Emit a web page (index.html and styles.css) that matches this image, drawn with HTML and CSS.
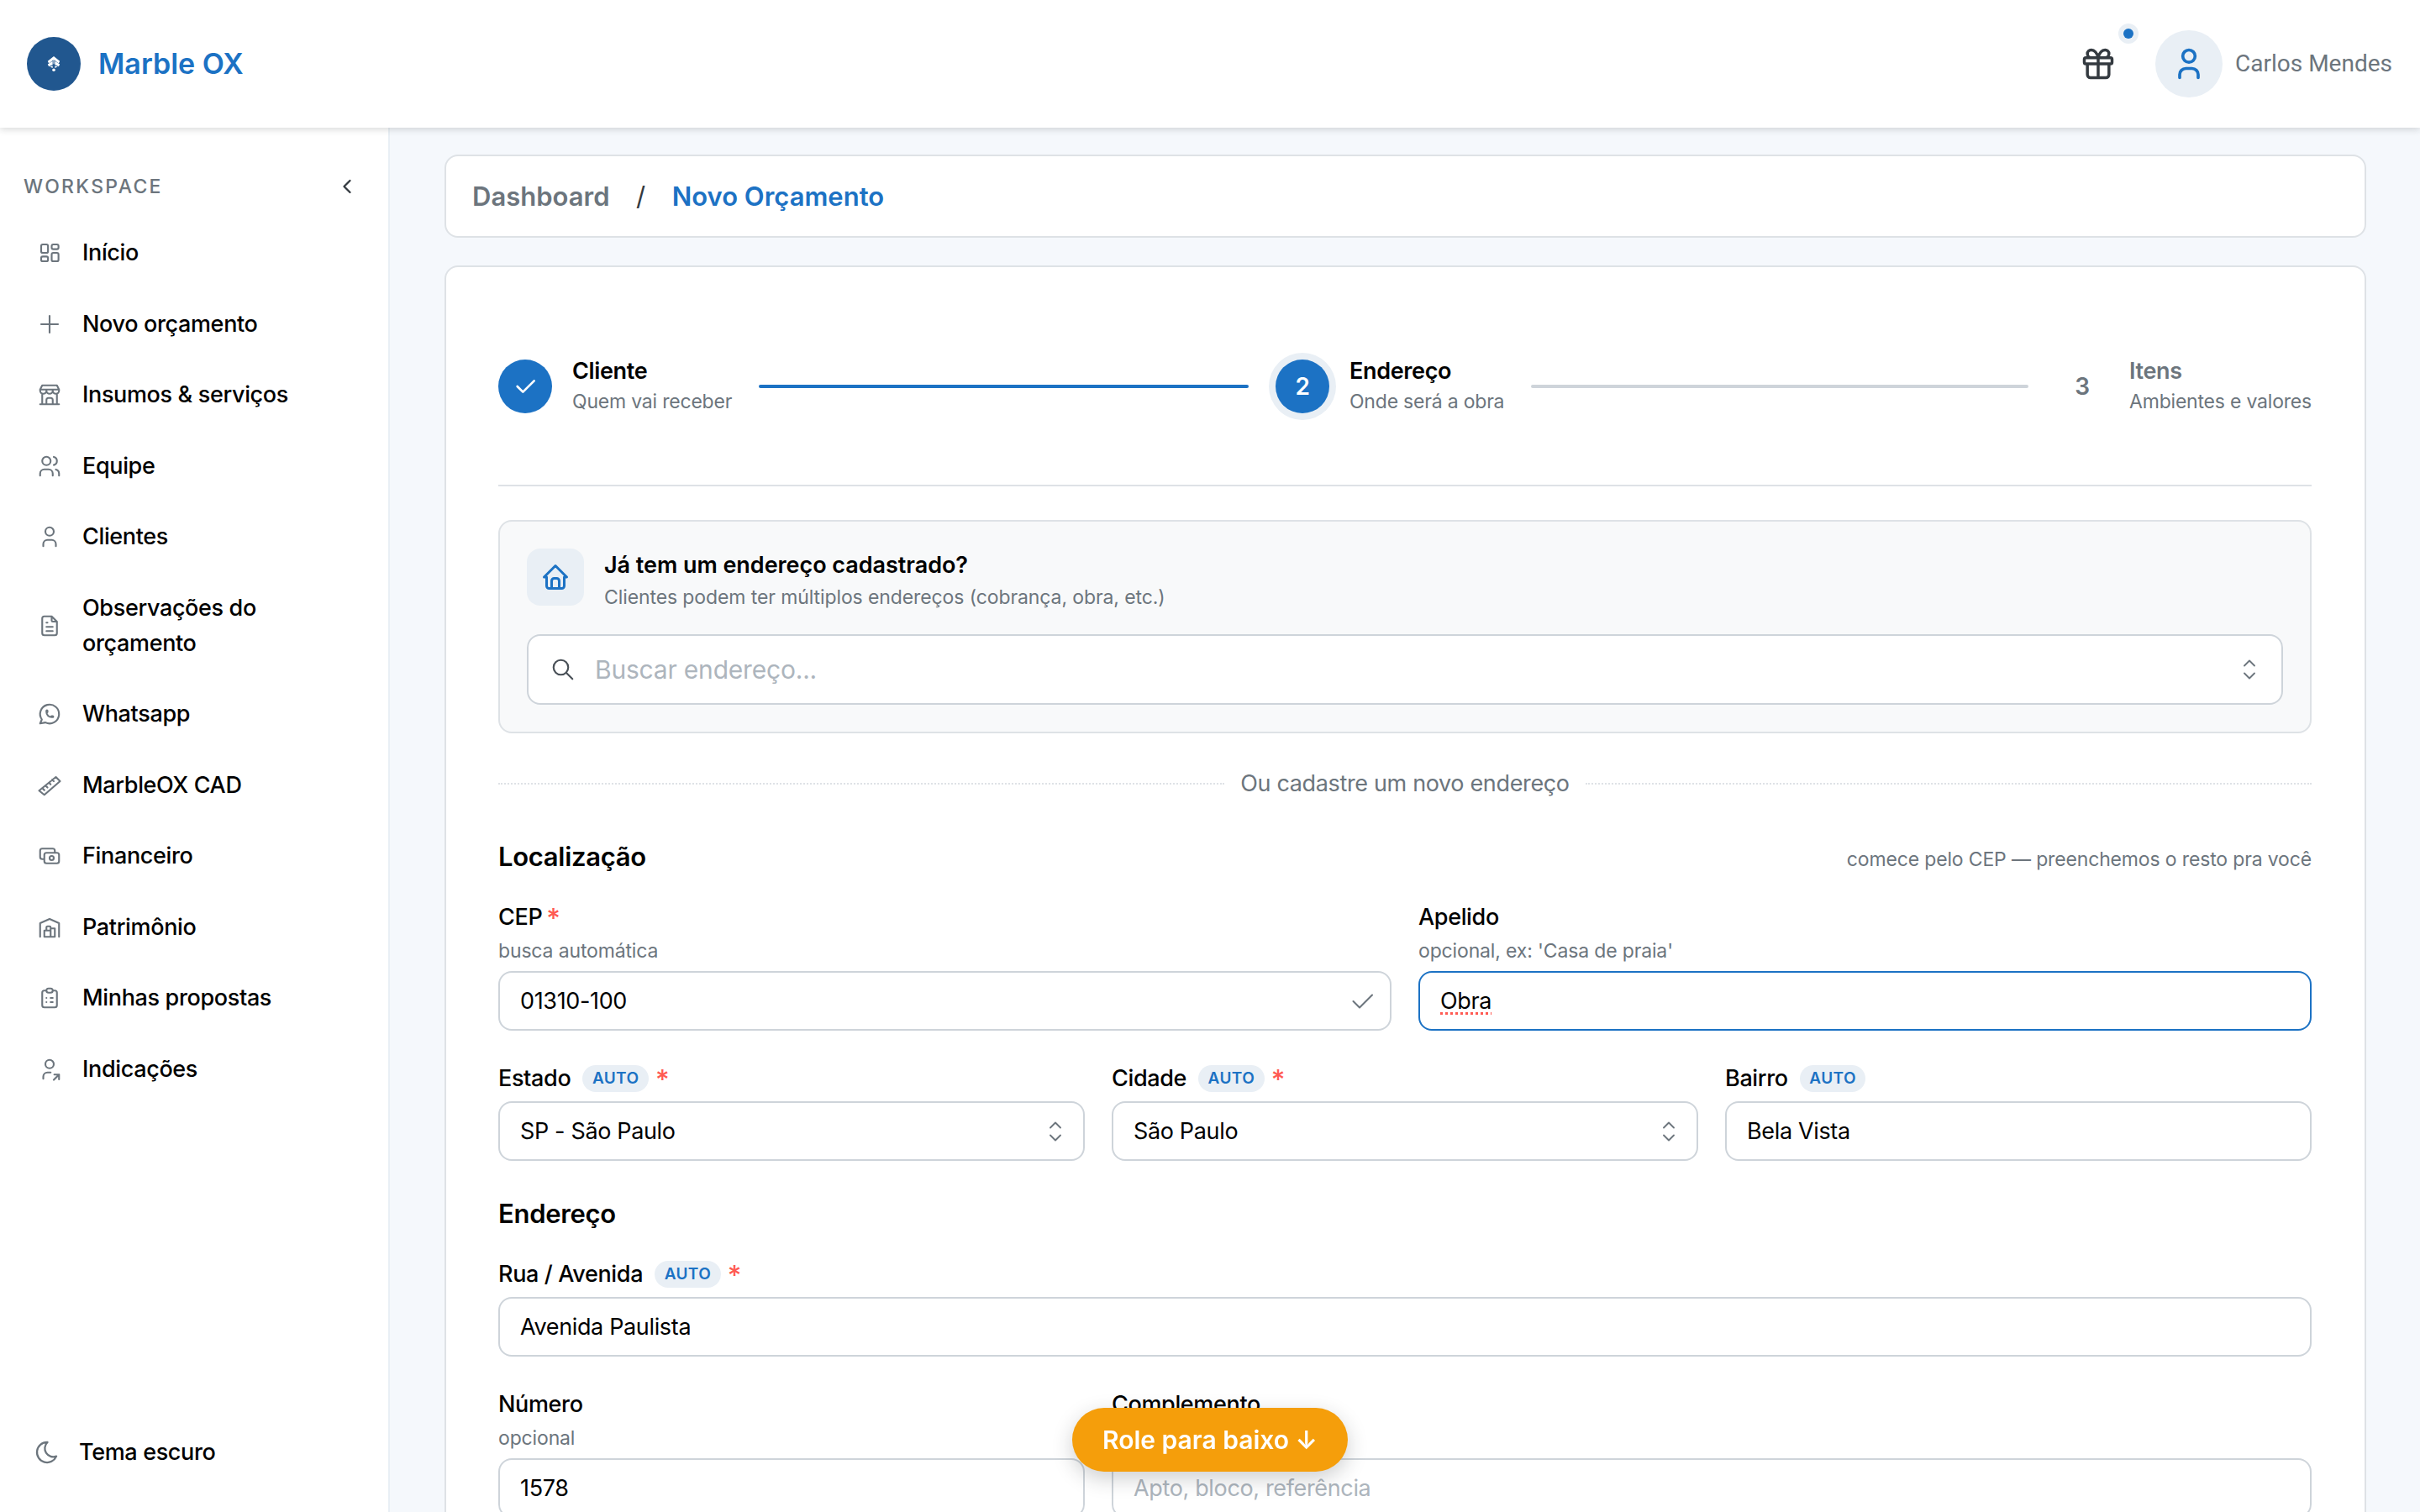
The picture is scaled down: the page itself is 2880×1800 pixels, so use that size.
FILE: index.html
```html
<!DOCTYPE html>
<html lang="pt-BR">
<head>
    <meta charset="UTF-8">
    <title>Marble OX - Novo Orçamento</title>
    <link rel="stylesheet" href="styles.css">
</head>
<body>
    <!-- icon sprite -->
    <svg class="sprite" xmlns="http://www.w3.org/2000/svg">
        <symbol id="i-grid" viewBox="0 0 24 24"><rect x="4" y="4" width="6.5" height="8" rx="1.5"/><rect x="14" y="4" width="6.5" height="4.500" rx="1.5"/><rect x="4" y="15.500" width="6.5" height="4.500" rx="1.5"/><rect x="14" y="12" width="6.5" height="8" rx="1.5"/></symbol>
        <symbol id="i-plus" viewBox="0 0 24 24"><path d="M12 4v16M4 12h16"/></symbol>
        <symbol id="i-store" viewBox="0 0 24 24"><path d="M3 21h18M3 7v1a3 3 0 0 0 6 0v-1m0 1a3 3 0 0 0 6 0v-1m0 1a3 3 0 0 0 6 0v-1h-18l2-4h14l2 4M5 21v-10.15M19 21v-10.15M9 21v-4a2 2 0 0 1 2-2h2a2 2 0 0 1 2 2v4"/></symbol>
        <symbol id="i-users" viewBox="0 0 24 24"><path d="M5 7a4 4 0 1 0 8 0a4 4 0 1 0-8 0M3 21v-2a4 4 0 0 1 4-4h4a4 4 0 0 1 4 4v2M16 3.13a4 4 0 0 1 0 7.75M21 21v-2a4 4 0 0 0-3-3.85"/></symbol>
        <symbol id="i-user" viewBox="0 0 24 24"><path d="M8 7a4 4 0 1 0 8 0a4 4 0 0 0-8 0M6 21v-2a4 4 0 0 1 4-4h4a4 4 0 0 1 4 4v2"/></symbol>
        <symbol id="i-file" viewBox="0 0 24 24"><path d="M14 3v4a1 1 0 0 0 1 1h4M17 21h-10a2 2 0 0 1-2-2v-14a2 2 0 0 1 2-2h7l5 5v11a2 2 0 0 1-2 2zM9 9h1M9 13h6M9 17h6"/></symbol>
        <symbol id="i-whatsapp" viewBox="0 0 24 24"><path d="M3 21l1.65-3.8a9 9 0 1 1 3.4 2.9l-5.05.9M9 10a.5.5 0 0 0 1 0v-1a.5.5 0 0 0-1 0v1a5 5 0 0 0 5 5h1a.5.5 0 0 0 0-1h-1a.5.5 0 0 0 0 1"/></symbol>
        <symbol id="i-ruler" viewBox="0 0 24 24"><path d="M18 4l4 4l-15 13l-5-4zM16 8l-1.5-1.5M13 11l-1.5-1.5M10 14l-1.5-1.5M7 16.5l-1.5-1.5"/></symbol>
        <symbol id="i-cash" viewBox="0 0 24 24"><path d="M7 11a2 2 0 0 1 2-2h10a2 2 0 0 1 2 2v6a2 2 0 0 1-2 2h-10a2 2 0 0 1-2-2zM12 14a2 2 0 1 0 4 0a2 2 0 1 0-4 0M17 9v-2a2 2 0 0 0-2-2h-10a2 2 0 0 0-2 2v6a2 2 0 0 0 2 2h2"/></symbol>
        <symbol id="i-warehouse" viewBox="0 0 24 24"><path d="M3 21v-13l9-4l9 4v13M13 13h4v8h-10v-6h6M13 21v-9a1 1 0 0 0-1-1h-2a1 1 0 0 0-1 1v3"/></symbol>
        <symbol id="i-clipboard" viewBox="0 0 24 24"><path d="M9 5h-2a2 2 0 0 0-2 2v12a2 2 0 0 0 2 2h10a2 2 0 0 0 2-2v-12a2 2 0 0 0-2-2h-2M9 5a2 2 0 0 1 2-2h2a2 2 0 0 1 2 2a2 2 0 0 1-2 2h-2a2 2 0 0 1-2-2zM9 12h.01M13 12h2M9 16h.01M13 16h2"/></symbol>
        <symbol id="i-share" viewBox="0 0 24 24"><path d="M8 7a4 4 0 1 0 8 0a4 4 0 0 0-8 0M6 21v-2a4 4 0 0 1 4-4h3M16 22l5-5M21 21.5v-4.5h-4.5"/></symbol>
        <symbol id="i-moon" viewBox="0 0 24 24"><path d="M12 3h.393a7.5 7.5 0 0 0 7.92 12.446a9 9 0 1 1-8.313-12.454z"/></symbol>
        <symbol id="i-gift" viewBox="0 0 24 24"><path d="M3 9a1 1 0 0 1 1-1h16a1 1 0 0 1 1 1v2a1 1 0 0 1-1 1h-16a1 1 0 0 1-1-1zM12 8v13M19 12v7a2 2 0 0 1-2 2h-10a2 2 0 0 1-2-2v-7M7.5 8a2.5 2.5 0 0 1 0-5a4.8 8 0 0 1 4.5 5a4.8 8 0 0 1 4.5-5a2.5 2.5 0 0 1 0 5"/></symbol>
        <symbol id="i-home" viewBox="0 0 24 24"><path d="M5 12h-2l9-9l9 9h-2M5 12v7a2 2 0 0 0 2 2h10a2 2 0 0 0 2-2v-7M9 21v-6a2 2 0 0 1 2-2h2a2 2 0 0 1 2 2v6"/></symbol>
        <symbol id="i-search" viewBox="0 0 24 24"><path d="M3 10a7 7 0 1 0 14 0a7 7 0 1 0-14 0M21 21l-6-6"/></symbol>
        <symbol id="i-selector" viewBox="0 0 24 24"><path d="M8 9l4-4l4 4M16 15l-4 4l-4-4"/></symbol>
        <symbol id="i-check" viewBox="0 0 24 24"><path d="M5 12l5 5l10-10"/></symbol>
        <symbol id="i-chevron" viewBox="0 0 24 24"><path d="M15 6l-6 6l6 6"/></symbol>
    </svg>

    <header class="topbar">
        <div class="brand">
            <span class="brand-mark">
                <svg viewBox="0 0 20 20" class="brand-leaf"><path d="M10 0l8 6.500l-1.500 3l-6-4.700v5.200l-.5.500l-.5-.5v-5.200l-6 4.700l-1.500-3z"/><path d="M2 10.500l6.500-4v4.500l-5 2.500zM18 10.500l-6.500-4v4.500l5 2.500z"/><path d="M5 14l3.500-1.500v3zM15 14l-3.500-1.500v3z"/><circle cx="10" cy="18" r="2"/></svg>
            </span>
            <span class="brand-name">Marble OX</span>
        </div>
        <div class="topbar-right">
            <div class="gift">
                <svg class="icon icon-gift"><use href="#i-gift"/></svg>
                <span class="gift-dot"></span>
            </div>
            <span class="avatar"><svg class="icon icon-avatar"><use href="#i-user"/></svg></span>
            <span class="user-name">Carlos Mendes</span>
        </div>
    </header>

    <div class="layout">
        <aside class="sidebar">
            <div class="sidebar-head">
                <span class="sidebar-title">WORKSPACE</span>
                <svg class="icon icon-collapse"><use href="#i-chevron"/></svg>
            </div>
            <nav class="nav">
                <a class="nav-item"><svg class="icon"><use href="#i-grid"/></svg><span>Início</span></a>
                <a class="nav-item"><svg class="icon"><use href="#i-plus"/></svg><span>Novo orçamento</span></a>
                <a class="nav-item"><svg class="icon"><use href="#i-store"/></svg><span>Insumos &amp; serviços</span></a>
                <a class="nav-item"><svg class="icon"><use href="#i-users"/></svg><span>Equipe</span></a>
                <a class="nav-item"><svg class="icon"><use href="#i-user"/></svg><span>Clientes</span></a>
                <a class="nav-item"><svg class="icon"><use href="#i-file"/></svg><span>Observações do orçamento</span></a>
                <a class="nav-item"><svg class="icon"><use href="#i-whatsapp"/></svg><span>Whatsapp</span></a>
                <a class="nav-item"><svg class="icon"><use href="#i-ruler"/></svg><span>MarbleOX CAD</span></a>
                <a class="nav-item"><svg class="icon"><use href="#i-cash"/></svg><span>Financeiro</span></a>
                <a class="nav-item"><svg class="icon"><use href="#i-warehouse"/></svg><span>Patrimônio</span></a>
                <a class="nav-item"><svg class="icon"><use href="#i-clipboard"/></svg><span>Minhas propostas</span></a>
                <a class="nav-item"><svg class="icon"><use href="#i-share"/></svg><span>Indicações</span></a>
            </nav>
            <div class="theme-toggle"><svg class="icon icon-moon"><use href="#i-moon"/></svg><span>Tema escuro</span></div>
        </aside>

        <main class="content">
            <div class="breadcrumb">
                <span class="crumb">Dashboard</span>
                <span class="crumb-sep">/</span>
                <span class="crumb-current">Novo Orçamento</span>
            </div>

            <section class="card">
                <div class="stepper">
                    <div class="step">
                        <span class="step-circle"><svg class="icon icon-step-check"><use href="#i-check"/></svg></span>
                        <div><div class="step-title">Cliente</div><div class="step-sub">Quem vai receber</div></div>
                    </div>
                    <span class="step-line step-line-done"></span>
                    <div class="step">
                        <span class="step-circle step-circle-active">2</span>
                        <div><div class="step-title">Endereço</div><div class="step-sub">Onde será a obra</div></div>
                    </div>
                    <span class="step-line"></span>
                    <div class="step step-todo">
                        <span class="step-circle step-circle-todo">3</span>
                        <div><div class="step-title">Itens</div><div class="step-sub">Ambientes e valores</div></div>
                    </div>
                </div>

                <div class="saved-panel">
                    <div class="saved-head">
                        <span class="saved-icon"><svg class="icon icon-home"><use href="#i-home"/></svg></span>
                        <div>
                            <div class="saved-title">Já tem um endereço cadastrado?</div>
                            <div class="saved-sub">Clientes podem ter múltiplos endereços (cobrança, obra, etc.)</div>
                        </div>
                    </div>
                    <div class="search-box">
                        <svg class="icon icon-search"><use href="#i-search"/></svg>
                        <span class="search-text">Buscar endereço...</span>
                        <svg class="icon icon-selector"><use href="#i-selector"/></svg>
                    </div>
                </div>

                <div class="or-line"><span>Ou cadastre um novo endereço</span></div>

                <div class="section-head">
                    <h3>Localização</h3>
                    <span class="section-note">comece pelo CEP — preenchemos o resto pra você</span>
                </div>
                <div class="row row-2">
                    <div class="field">
                        <div class="label">CEP <span class="req">*</span></div>
                        <div class="hint">busca automática</div>
                        <div class="input input-select"><span>01310-100</span><svg class="icon icon-check"><use href="#i-check"/></svg></div>
                    </div>
                    <div class="field">
                        <div class="label">Apelido</div>
                        <div class="hint">opcional, ex: 'Casa de praia'</div>
                        <div class="input input-focus"><span class="spell">Obra</span></div>
                    </div>
                </div>
                <div class="row row-3">
                    <div class="field">
                        <div class="label">Estado <span class="auto">AUTO</span> <span class="req">*</span></div>
                        <div class="input input-select"><span>SP - São Paulo</span><svg class="icon icon-selector"><use href="#i-selector"/></svg></div>
                    </div>
                    <div class="field">
                        <div class="label">Cidade <span class="auto">AUTO</span> <span class="req">*</span></div>
                        <div class="input input-select"><span>São Paulo</span><svg class="icon icon-selector"><use href="#i-selector"/></svg></div>
                    </div>
                    <div class="field">
                        <div class="label">Bairro <span class="auto">AUTO</span></div>
                        <div class="input"><span>Bela Vista</span></div>
                    </div>
                </div>

                <div class="section-head section-head-second">
                    <h3>Endereço</h3>
                </div>
                <div class="row">
                    <div class="field">
                        <div class="label">Rua / Avenida <span class="auto">AUTO</span> <span class="req">*</span></div>
                        <div class="input"><span>Avenida Paulista</span></div>
                    </div>
                </div>
                <div class="row row-3 row-num">
                    <div class="field">
                        <div class="label">Número</div>
                        <div class="hint">opcional</div>
                        <div class="input"><span>1578</span></div>
                    </div>
                    <div class="field field-wide">
                        <div class="label">Complemento</div>
                        <div class="hint">opcional</div>
                        <div class="input"><span class="placeholder">Apto, bloco, referência</span></div>
                    </div>
                </div>
            </section>
        </main>
    </div>

    <button class="scroll-hint" type="button">Role para baixo ↓</button>
</body>
</html>
```

FILE: styles.css
```css
* {
    box-sizing: border-box;
}
html, body {
    height: 100%;
}
body {
    margin: 0;
    height: 100vh;
    overflow: hidden;
    display: flex;
    flex-direction: column;
    font-family: Inter, "Liberation Sans", sans-serif;
    font-size: 27px;
    letter-spacing: -0.35px;
    line-height: 42px;
    color: #000;
    background: #f5f8fc;
}
.sprite {
    display: none;
}
.icon {
    width: 30px;
    height: 30px;
    flex: none;
    fill: none;
    stroke: #6c757d;
    stroke-width: 1.7;
    stroke-linecap: round;
    stroke-linejoin: round;
}

/* top bar */
.topbar {
    position: relative;
    z-index: 2;
    flex: none;
    height: 152px;
    display: flex;
    align-items: center;
    justify-content: space-between;
    padding: 0 33px 0 32px;
    background: #fff;
    box-shadow: 0 2px 8px rgba(33, 37, 41, 0.18);
}
.brand {
    display: flex;
    align-items: center;
    gap: 21px;
}
.brand-mark {
    width: 64px;
    height: 64px;
    border-radius: 50%;
    background: #21578f;
    display: flex;
    align-items: center;
    justify-content: center;
}
.brand-leaf {
    width: 18px;
    height: 18px;
    fill: #fff;
}
.brand-name {
    font-size: 34px;
    font-weight: 600;
    letter-spacing: 0;
    color: #1c72c4;
}
.topbar-right {
    display: flex;
    align-items: center;
}
.gift {
    position: relative;
    width: 44px;
    height: 44px;
    margin-right: 46px;
}
.icon-gift {
    width: 44px;
    height: 44px;
    stroke: #343a40;
    stroke-width: 1.9;
}
.gift-dot {
    position: absolute;
    top: -20px;
    right: -20px;
    width: 12px;
    height: 12px;
    border-radius: 50%;
    background: #1c72c4;
    box-shadow: 0 0 0 6px #e9eff5;
}
.avatar {
    width: 80px;
    height: 80px;
    border-radius: 50%;
    background: #e9eff5;
    display: flex;
    align-items: center;
    justify-content: center;
    margin-right: 15px;
}
.icon-avatar {
    width: 44px;
    height: 44px;
    stroke: #1c72c4;
    stroke-width: 2;
}
.user-name {
    font-family: Roboto, sans-serif;
    font-size: 28px;
    letter-spacing: 0;
    color: #6c757d;
}

/* layout */
.layout {
    flex: 1;
    min-height: 0;
    display: flex;
}
.sidebar {
    flex: none;
    width: 464px;
    display: flex;
    flex-direction: column;
    background: #fff;
    border-right: 2px solid #e9eff5;
    padding: 48px 28px 50px;
}
.sidebar-head {
    display: flex;
    align-items: center;
    justify-content: space-between;
    height: 42px;
    margin: 1px 0 17px;
    padding-right: 7px;
}
.sidebar-title {
    font-size: 23px;
    font-weight: 500;
    letter-spacing: 2.3px;
    color: #6c757d;
}
.icon-collapse {
    width: 28px;
    height: 28px;
    stroke: #343a40;
    stroke-width: 2;
}
.nav {
    display: flex;
    flex-direction: column;
    gap: 2.5px;
}
.nav-item {
    display: flex;
    align-items: center;
    gap: 24px;
    padding: 20px 16px;
    font-weight: 500;
}
.theme-toggle {
    margin-top: auto;
    display: flex;
    align-items: center;
    gap: 22px;
    padding-left: 12px;
    font-weight: 500;
}
.icon-moon {
    width: 32px;
    height: 32px;
}

/* main column */
.content {
    flex: 1;
    min-width: 0;
    overflow: hidden;
    padding: 32px 64px 32px 65px;
}
.breadcrumb {
    display: flex;
    align-items: center;
    height: 99px;
    padding: 0 31px;
    margin-bottom: 33px;
    background: #fff;
    border: 2px solid #dee2e6;
    border-radius: 16px;
    font-size: 31px;
    font-weight: 600;
    letter-spacing: 0;
}
.crumb {
    color: #6c757d;
}
.crumb-sep {
    margin: 0 31.5px;
    font-weight: 400;
    color: #343a40;
}
.crumb-current {
    color: #1c72c4;
}
.card {
    background: #fff;
    border: 2px solid #dee2e6;
    border-radius: 16px 16px 0 0;
    padding: 64px 63px 200px 62px;
}

/* stepper */
.stepper {
    display: flex;
    align-items: center;
    gap: 32px;
    padding: 42px 0 81px;
    border-bottom: 2px solid #dee2e6;
}
.step {
    display: flex;
    align-items: center;
    gap: 24px;
}
.step-circle {
    width: 64px;
    height: 64px;
    border-radius: 50%;
    display: flex;
    align-items: center;
    justify-content: center;
    background: #1c72c4;
    color: #fff;
    font-size: 28px;
    font-weight: 600;
}
.icon-step-check {
    width: 32px;
    height: 32px;
    stroke: #fff;
    stroke-width: 2;
}
.step-circle-active {
    box-shadow: 0 0 0 8px #e9eff5;
}
.step-circle-todo {
    background: transparent;
    color: #6c757d;
}
.step-title {
    font-weight: 600;
    line-height: 36px;
}
.step-sub {
    font-size: 23px;
    letter-spacing: -0.2px;
    line-height: 36px;
    color: #6c757d;
}
.step-todo .step-title {
    color: #6c757d;
}
.step-line {
    flex: 1;
    height: 4px;
    border-radius: 2px;
    background: #ced4da;
}
.step-line-done {
    flex-grow: 0.985;
    background: #1c72c4;
}

/* saved address panel */
.saved-panel {
    margin-top: 40px;
    padding: 32px;
    background: #f8f9fa;
    border: 2px solid #dee2e6;
    border-radius: 16px;
}
.saved-head {
    display: flex;
    align-items: flex-start;
    gap: 24px;
    margin-bottom: 26px;
}
.saved-icon {
    width: 68px;
    height: 68px;
    border-radius: 16px;
    background: #e9eff5;
    display: flex;
    align-items: center;
    justify-content: center;
}
.icon-home {
    width: 36px;
    height: 36px;
    stroke: #1c72c4;
    stroke-width: 2;
}
.saved-title {
    font-weight: 600;
    letter-spacing: -0.05px;
    line-height: 40px;
}
.saved-sub {
    font-size: 23px;
    letter-spacing: -0.1px;
    line-height: 36px;
    color: #6c757d;
}
.search-box {
    display: flex;
    align-items: center;
    gap: 23px;
    height: 84px;
    padding: 0 20px 0 26px;
    background: #fff;
    border: 2px solid #ced4da;
    border-radius: 16px;
}
.search-text {
    flex: 1;
    font-size: 30px;
    letter-spacing: -0.2px;
    color: #adb5bd;
}
.or-line {
    display: flex;
    align-items: center;
    gap: 19px;
    margin-top: 39px;
    color: #6c757d;
}
.or-line::before, .or-line::after {
    content: "";
    flex: 1;
    border-top: 2px dotted #dee2e6;
}

/* form */
.section-head {
    display: flex;
    align-items: center;
    justify-content: space-between;
    margin-top: 42px;
}
.section-head-second {
    margin-top: 39px;
}
.section-head h3 {
    margin: 0;
    font-size: 31px;
    letter-spacing: -0.3px;
    line-height: 48px;
    font-weight: 600;
}
.section-note {
    margin-top: 5px;
    font-size: 23px;
    letter-spacing: -0.15px;
    color: #6c757d;
}
.row {
    display: grid;
    gap: 32px;
    margin-top: 27px;
}
.row-2 {
    grid-template-columns: 1fr 1fr;
}
.row-3 {
    grid-template-columns: 1fr 1fr 1fr;
    margin-top: 36px;
}
.label {
    display: flex;
    align-items: center;
    gap: 5px;
    height: 42px;
    margin-bottom: 6px;
    font-weight: 500;
}
.field .label:has(+ .hint) {
    margin-bottom: 1px;
}
.hint {
    font-size: 23px;
    letter-spacing: -0.15px;
    line-height: 36px;
    margin-bottom: 6px;
    color: #6c757d;
}
.req {
    font-size: 32px;
    color: #ff5a52;
    margin-top: 3px;
}
.field-wide {
    grid-column: span 2;
}
.auto {
    height: 32px;
    padding: 0 11.5px;
    margin: 0 3px 0 9px;
    border-radius: 16px;
    background: #e9eff5;
    font-size: 19px;
    line-height: 32px;
    font-weight: 600;
    letter-spacing: 0.4px;
    color: #1c72c4;
}
.input {
    display: flex;
    align-items: center;
    justify-content: space-between;
    height: 71px;
    padding: 0 24px;
    background: #fff;
    border: 2px solid #ced4da;
    border-radius: 16px;
}
.input-select {
    padding-right: 15px;
}
.input-focus {
    border-color: #1c72c4;
}
.spell {
    text-decoration: underline dotted #ff5a52 3px;
    text-underline-offset: 4px;
}
.placeholder {
    color: #adb5bd;
}
.icon-check {
    width: 36px;
    height: 36px;
    stroke-width: 1.4;
}
.icon-selector {
    width: 36px;
    height: 36px;
    stroke-width: 1.25;
}
.icon-search {
    width: 30px;
    height: 30px;
    stroke: #495057;
}

/* floating button */
.scroll-hint {
    position: fixed;
    left: 50%;
    bottom: 48px;
    transform: translateX(-50%);
    height: 76px;
    padding: 0 36px;
    border: none;
    border-radius: 38px;
    background: #f59e0b;
    color: #fff;
    font-family: inherit;
    font-size: 30px;
    font-weight: 600;
    box-shadow: 0 8px 24px rgba(33, 37, 41, 0.22);
}
```
